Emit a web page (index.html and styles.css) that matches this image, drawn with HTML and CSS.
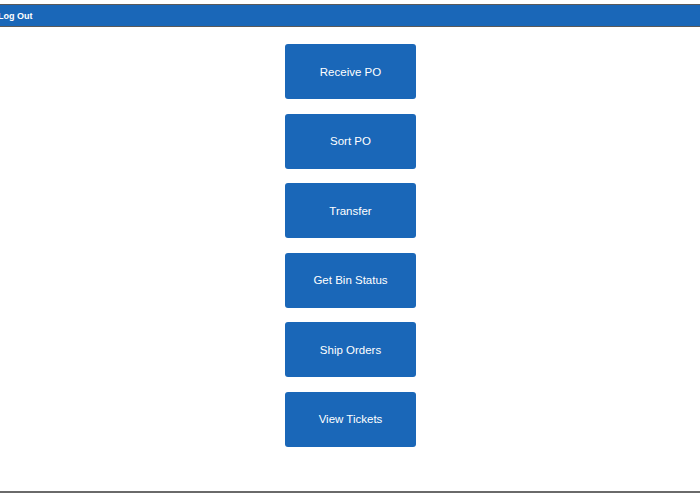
FILE: index.html
```html
<!DOCTYPE html>
<html>
<head>
<meta charset="utf-8">
<link rel="stylesheet" href="styles.css">
</head>
<body>
<div class="page">
  <div class="topbar"><span class="logout">Log Out</span></div>
  <div class="menu">
    <div class="btn">Receive PO</div>
    <div class="btn">Sort PO</div>
    <div class="btn">Transfer</div>
    <div class="btn">Get Bin Status</div>
    <div class="btn">Ship Orders</div>
    <div class="btn">View Tickets</div>
  </div>
  <div class="bottomline"></div>
</div>
</body>
</html>
```
FILE: styles.css
```css
html, body {
  margin: 0;
  padding: 0;
  background: #ffffff;
  font-family: "Liberation Sans", Arial, sans-serif;
}
.page {
  padding-top: 4px;
  width: 700px;
}
.topbar {
  height: 21px;
  background: #1a67b8;
  border-top: 1px solid #5a5a5a;
  border-bottom: 1px solid #5a5a5a;
  display: flex;
  align-items: center;
}
.logout {
  color: #ffffff;
  font-weight: bold;
  font-size: 9px;
  margin-left: -2px;
}
.menu {
  display: flex;
  flex-direction: column;
  align-items: center;
  gap: 14.6px;
  padding-top: 17px;
  height: 464px;
  box-sizing: border-box;
}
.btn {
  width: 131px;
  height: 55px;
  background: #1a67b8;
  border-radius: 3px;
  color: #ffffff;
  font-size: 11.5px;
  padding-left: 1px;
  box-sizing: border-box;
  display: flex;
  align-items: center;
  justify-content: center;
}
.bottomline {
  height: 2px;
  background: #6a6a6a;
}
```
